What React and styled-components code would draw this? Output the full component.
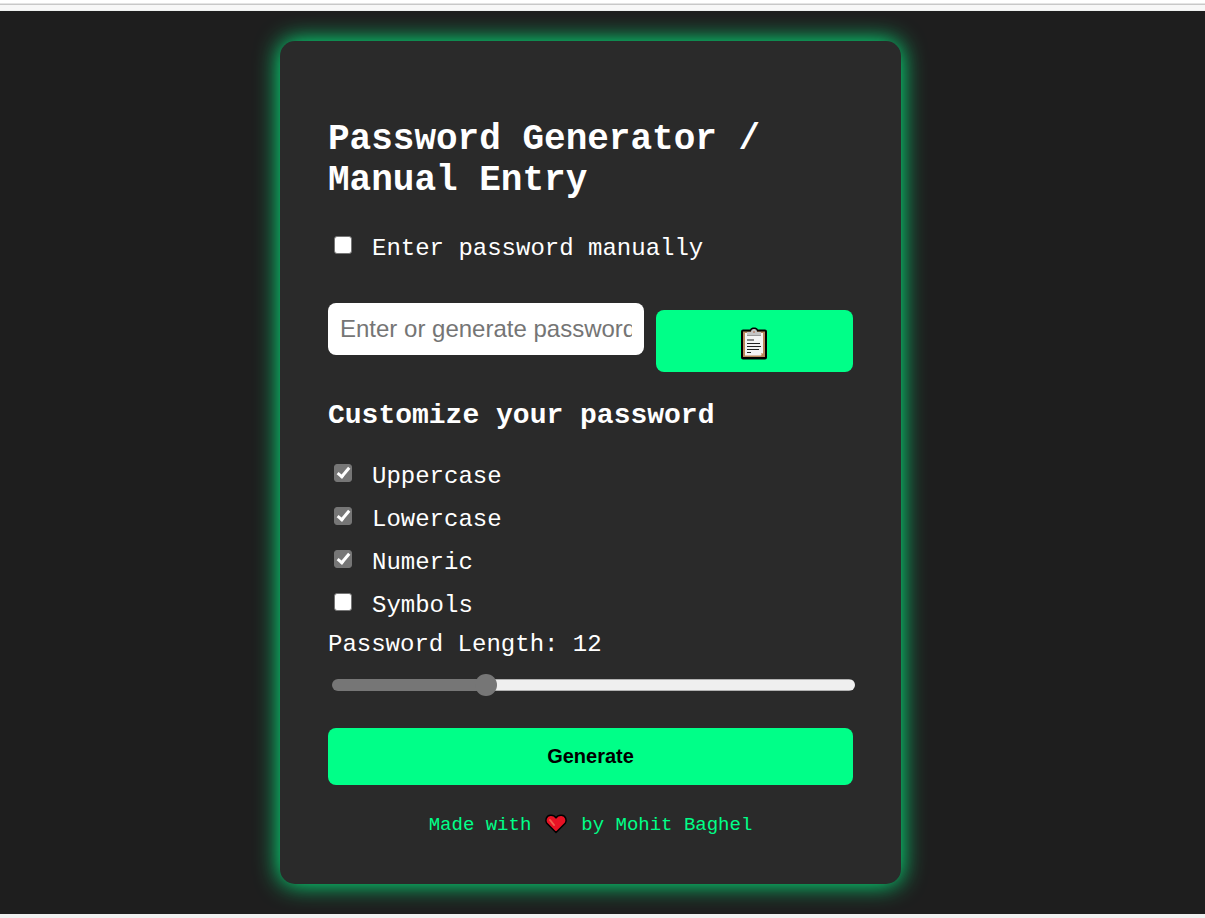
import React, { useState } from "react";
import styled, { createGlobalStyle } from "styled-components";

const GlobalStyle = createGlobalStyle`
  *,
  *::after {
    box-sizing: border-box;
  }
  body {
    margin: 0;
    background: #f0f0f0;
    color: #ffffff;
    font: 24px/25px "Liberation Mono", "Courier New", monospace;
  }
`;

const BrowserEdge = styled.div`
  height: 11px;
  background: linear-gradient(#ffffff 3px, #e4e4e4 3px 4px, #c8c8c8 4px 5px, #f7f7f7 5px 10px, #eef0ef 10px);
`;

const Page = styled.main`
  display: flex;
  justify-content: center;
  padding: 30px 24px 30px 0;
  background: #1e1e1e;
`;

const Card = styled.form`
  width: 100%;
  max-width: 621px;
  padding: 78px 48px 48px;
  border-radius: 15px;
  background: #2a2a2a;
  box-shadow: 0 0 24px #00ff88;
`;

const Title = styled.h1`
  margin: 0 0 35px;
  font-size: 36px;
  line-height: 41px;
`;

const Subtitle = styled.h2`
  margin: 28px 0 32px;
  font-size: 28px;
  line-height: 32px;
`;

const Option = styled.label`
  display: flex;
  align-items: flex-start;
  gap: 20px;
  padding-left: 6px;
`;

const Tick = styled.input`
  appearance: none;
  display: flex;
  justify-content: center;
  width: 18px;
  height: 18px;
  margin: 0;
  border: 1px solid #767676;
  border-radius: 3px;
  background: #ffffff;

  &:checked {
    background: #767676;
  }
  &:checked::after {
    content: "";
    width: 7px;
    height: 13px;
    border: solid #ffffff;
    border-width: 0 3px 3px 0;
    transform: rotate(40deg);
  }
`;

const PasswordRow = styled.div`
  display: grid;
  grid-template-columns: 8fr 5fr;
  align-items: start;
  gap: 12px;
  margin-top: 42px;
`;

const PasswordInput = styled.input`
  width: 100%;
  min-width: 0;
  height: 52px;
  padding: 0 12px;
  border: 0;
  border-radius: 8px;
  background: #ffffff;
  font: 24px "Liberation Sans", Arial, sans-serif;

  &::placeholder {
    color: #757575;
  }
`;

const Button = styled.button`
  display: flex;
  align-items: center;
  justify-content: center;
  padding: 0;
  border: 0;
  border-radius: 8px;
  background: #00ff88;
  color: #000000;
  font: bold 20px "Liberation Sans", Arial, sans-serif;
  cursor: pointer;
`;

const CopyButton = styled(Button)`
  height: 62px;
  margin-top: 7px;
  padding-top: 6px;
`;

const GenerateButton = styled(Button)`
  width: 100%;
  height: 57px;
`;

const Options = styled.div`
  display: flex;
  flex-direction: column;
  gap: 18px;
`;

const LengthLabel = styled.label`
  display: block;
  margin-top: 14px;
`;

const Slider = styled.input`
  display: block;
  appearance: none;
  width: calc(100% - 2px);
  height: 24px;
  margin: 16px 0 31px 4px;
  background: transparent;

  &::-webkit-slider-runnable-track {
    height: 12px;
    border-radius: 6px;
    background:
      linear-gradient(to right, #767676 var(--fill), transparent var(--fill)),
      linear-gradient(#b2b2b2 1px, #efefef 1px 11px, #b2b2b2 11px);
  }
  &::-webkit-slider-thumb {
    appearance: none;
    width: 22px;
    height: 22px;
    margin-top: -5px;
    border-radius: 50%;
    background: #767676;
  }
`;

const Footer = styled.footer`
  display: flex;
  justify-content: center;
  gap: 13px;
  margin-top: 29px;
  color: #00ff88;
  font-size: 19px;
  line-height: 22px;
`;

const ClipboardIcon = () => (
  <svg width="28" height="34" viewBox="0 0 28 34" aria-hidden="true">
    <path d="M3 2.500h7c1-1.500 2-2 4-2s3 .5 4 2h7q2 0 2 2v26q0 2-2 2H3q-2 0-2-2v-26q0-2 2-2z" fill="#000" />
    <rect x="3" y="4.500" width="22" height="25.500" fill="#b8895c" />
    <path d="M5 6h18v20l-2 2.500H5z" fill="#f4f4f4" />
    <path d="M21 28.500v-2.500h2z" fill="#d9b48b" />
    <path d="M7 5h4q0-3 3-3t3 3h4v4H7z" fill="#c4c4c4" />
    <path d="M7 8h14v1H7z" fill="#999" />
    <circle cx="14" cy="5" r="1" fill="#b8846f" />
    <path d="M7 12h7v2H7z" fill="#8a8a8a" />
    <path d="M7 16.500h13M7 19.500h14M7 22.500h12M7 25.500h4" stroke="#222" strokeWidth="1" />
  </svg>
);

const HeartIcon = () => (
  <svg width="24" height="22" viewBox="0 0 24 22" aria-label="love" role="img">
    <path d="M12 18.500L2.800 9.300C.8 6.700 2 1.500 6.500 1.200 9 1 11 2.300 12 3.900 13 2.300 15 1 17.500 1.200 22 1.500 23.200 6.700 21.200 9.300z" fill="#e81224" stroke="#000" strokeWidth="1.500" strokeLinejoin="round" />
    <path d="M6 6l4 5" stroke="#f0604d" strokeWidth="2" strokeLinecap="round" />
  </svg>
);

const charsets = [
  { name: "Uppercase", chars: "ABCDEFGHIJKLMNOPQRSTUVWXYZ", on: true },
  { name: "Lowercase", chars: "abcdefghijklmnopqrstuvwxyz", on: true },
  { name: "Numeric", chars: "0123456789", on: true },
  { name: "Symbols", chars: "!@#$%^&*()-_=+?", on: false },
];

const MIN = 4;
const MAX = 32;

export default function App() {
  const [manual, setManual] = useState(false);
  const [password, setPassword] = useState("");
  const [length, setLength] = useState(12);
  const [enabled, setEnabled] = useState(charsets.map((set) => set.on));

  const generate = (event) => {
    event.preventDefault();
    const pool = charsets.filter((_, i) => enabled[i]).map((set) => set.chars).join("");
    if (!pool) return;
    const values = crypto.getRandomValues(new Uint32Array(length));
    setPassword(Array.from(values, (value) => pool[value % pool.length]).join(""));
  };

  return (
    <>
      <GlobalStyle />
      <BrowserEdge />
      <Page>
        <Card onSubmit={generate}>
          <Title>Password Generator / Manual Entry</Title>
          <Option>
            <Tick type="checkbox" checked={manual} onChange={(e) => setManual(e.target.checked)} />
            Enter password manually
          </Option>
          <PasswordRow>
            <PasswordInput
              type="text"
              aria-label="Password"
              placeholder="Enter or generate password"
              readOnly={!manual}
              value={password}
              onChange={(e) => setPassword(e.target.value)}
            />
            <CopyButton type="button" aria-label="Copy password" onClick={() => navigator.clipboard.writeText(password)}>
              <ClipboardIcon />
            </CopyButton>
          </PasswordRow>
          <Subtitle>Customize your password</Subtitle>
          <Options>
            {charsets.map((set, i) => (
              <Option key={set.name}>
                <Tick
                  type="checkbox"
                  checked={enabled[i]}
                  onChange={() => setEnabled(enabled.map((on, j) => (j === i ? !on : on)))}
                />
                {set.name}
              </Option>
            ))}
          </Options>
          <LengthLabel htmlFor="length">Password Length: {length}</LengthLabel>
          <Slider
            id="length"
            type="range"
            min={MIN}
            max={MAX}
            value={length}
            onChange={(e) => setLength(Number(e.target.value))}
            style={{ "--fill": `${((length - MIN) / (MAX - MIN)) * 100}%` }}
          />
          <GenerateButton type="submit">Generate</GenerateButton>
          <Footer>
            <span>Made with</span>
            <HeartIcon />
            <span>by Mohit Baghel</span>
          </Footer>
        </Card>
      </Page>
    </>
  );
}
